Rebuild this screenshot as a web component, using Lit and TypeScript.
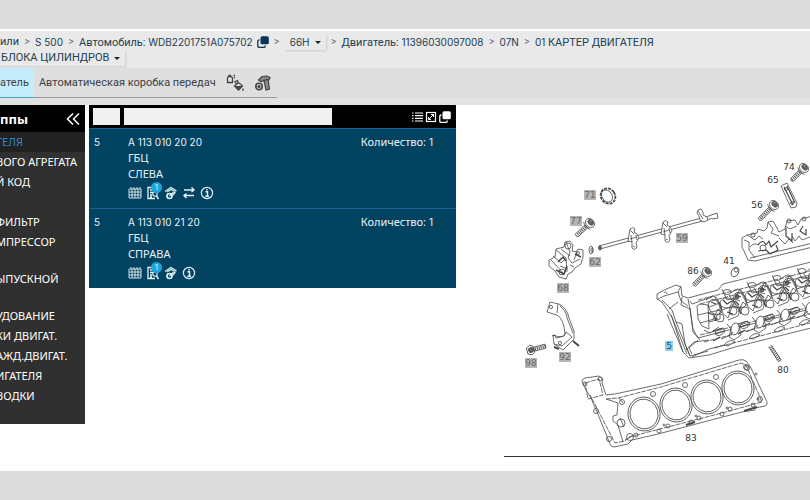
import { LitElement, html, css, svg, nothing } from "lit";
import { customElement, property } from "lit/decorators.js";

const calendarIcon = svg`<svg viewBox="0 0 14 14" width="14" height="14" fill="none" stroke="currentColor">
  <path d="M1 3h12v9H1zM1 6h12M1 9h12M4 3v9M7 3v9M10 3v9M3 1v2M6 1v2M9 1v2M12 1v2" stroke-width=".9"/></svg>`;
const reportIcon = svg`<svg viewBox="0 0 14 14" width="14" height="14" fill="none" stroke="currentColor">
  <path d="M8 1.500H2v11h7M4 4h3M4 6.500h3M4 9h2M4 11h2" stroke-width="1.300"/><circle cx="9" cy="8" r="2.200" stroke-width="1.100"/><path d="M10.500 10l2 3" stroke-width="1.400"/></svg>`;
const partIcon = svg`<svg viewBox="0 0 14 14" width="14" height="14" fill="none" stroke="currentColor">
  <path d="M1 5.500l6-4 5.500 3.500M3 6l4-2.500 3 1.500" stroke-width="1.100"/><circle cx="5.500" cy="10" r="2.500" stroke-width="1.600"/><path d="M5.500 10l4-4h2.500M8.500 9.500l2.500-3" stroke-width="1.200"/></svg>`;
const swapIcon = svg`<svg viewBox="0 0 14 14" width="14" height="14" fill="none" stroke="currentColor" stroke-width="1.400">
  <path d="M2 4h10M9.500 1.500L12 4 9.500 6M12 9.500H2M4.500 7.500L2 9.500 4.500 12"/></svg>`;
const infoIcon = svg`<svg viewBox="0 0 14 14" width="14" height="14" fill="none" stroke="currentColor">
  <circle cx="7" cy="7" r="5.600" stroke-width="1.200"/><path d="M5.500 5.800h2v4.200M5.300 10.200h3.700M6.300 3.700h1.400" stroke-width="1.400"/></svg>`;
const copyIcon = svg`<svg viewBox="0 0 12 12" width="12" height="12" fill="none">
  <path d="M2.500 4h-.5a1.200 1.200 0 0 0-1.200 1.200v5a1.200 1.200 0 0 0 1.200 1.200h5a1.200 1.200 0 0 0 1.200-1.200v-.7" stroke="currentColor" stroke-width="1.300"/><rect x="3.500" y=".3" width="8.300" height="8" rx="1.500" fill="currentColor"/></svg>`;
const listIcon = svg`<svg viewBox="0 0 12 12" width="12" height="12" stroke="currentColor" stroke-width="1.200">
  <path d="M1 2h1.500M4 2h8M1 4.700h1.500M4 4.700h8M1 7.400h1.500M4 7.400h8M1 10h1.500M4 10h8"/></svg>`;
const expandIcon = svg`<svg viewBox="0 0 12 12" width="12" height="12" fill="none" stroke="currentColor">
  <rect x="1.500" y="1.500" width="9" height="9" stroke-width="1.200"/><path d="M3.500 8.500l5-5M6 3.500h2.500V6M3.500 6v2.500H6" stroke-width="1"/></svg>`;
const collapseIcon = svg`<svg viewBox="0 0 14 12" width="14" height="12" fill="none" stroke="currentColor" stroke-width="1.500">
  <path d="M7 .5L1.500 6 7 11.500M13 .5L7.500 6l5.500 5.500"/></svg>`;
const fluidsIcon = svg`<svg viewBox="0 0 18 18" width="18" height="18" fill="none" stroke="#444">
  <path d="M1.500 8.500V4L2.500 2.500h2.500L6.500 4v4.500zM3 2.500v-1h2M7.500 1.500h1.500M8 3.500h1" stroke-width="1.300"/><path d="M8.500 12l4-3.500 4 3.500-4 4zM10.500 10l-1.500-2.500 2.500-1 1 3" stroke-width="1.300"/><path d="M9 12l7 0-3.500 4z" fill="#444" stroke="none"/><path d="M17 14.500v2.500" stroke-width="1.300"/></svg>`;
const toolsIcon = svg`<svg viewBox="0 0 18 18" width="18" height="18" fill="none" stroke="#444">
  <circle cx="5" cy="12.500" r="3.200" stroke-width="1.600"/><circle cx="5" cy="12.500" r="1.600" fill="#444" stroke="none"/><path d="M4.500 6L8 2.500l5-.5 3 1.500-1 2.500-4 .5-4 1z" fill="#888" stroke-width="1.200"/><path d="M10 6.500l2 9.500 3.500-1L14 5.500z" fill="#888" stroke-width="1.200"/></svg>`;

interface Part { pos: string; code: string; lines: string[]; swap: boolean }

const parts: Part[] = [
  { pos: "5", code: "A 113 010 20 20", lines: ["ГБЦ", "СЛЕВА"], swap: true },
  { pos: "5", code: "A 113 010 21 20", lines: ["ГБЦ", "СПРАВА"], swap: false },
];

const groups: { label: string; size?: string; active?: boolean }[] = [
  { label: "ТЕЛЯ", active: true },
  { label: "ВОГО АГРЕГАТА" },
  { label: "Й КОД", size: "mid" },
  { label: "ФИЛЬТР" },
  { label: "МПРЕССОР", size: "tall" },
  { label: "ЫПУСКНОЙ", size: "tall" },
  { label: "УДОВАНИЕ" },
  { label: "КИ ДВИГАТ." },
  { label: "АЖД.ДВИГАТ." },
  { label: "ИГАТЕЛЯ" },
  { label: "ВОДКИ" },
];

@customElement("part-row")
export class PartRow extends LitElement {
  @property({ attribute: false }) part!: Part;

  static styles = css`
    :host { display: grid; grid-template-columns: 34px 1fr auto; padding: 5px 23px 5px 5px;
      background: #034362; color: #e6f2f8; border-top: 1px solid #17609a;
      font: 11px/16px "Noto Sans", sans-serif; }
    .code { font: 10px/16px Inter, sans-serif; }
    .name { margin: 0; line-height: 16px; }
    .icons { display: flex; gap: 4px; padding: 3px 0 2px; }
    button { position: relative; display: block; width: 14px; height: 16px; padding: 1px 0; border: 0;
      background: none; color: inherit; }
    .badge { position: absolute; top: -3px; right: -2px; width: 11px; height: 11px; border-radius: 50%;
      background: #23a3dc; color: #d8f2ff; font: 8px/11px Inter, sans-serif; text-align: center; }
    svg { display: block; }
  `;

  render() {
    const { pos, code, lines, swap } = this.part;
    return html`
      <span class="code">${pos}</span>
      <div>
        <div class="code">${code}</div>
        ${lines.map((l) => html`<p class="name">${l}</p>`)}
        <div class="icons">
          <button aria-label="Календарь">${calendarIcon}</button>
          <button aria-label="Документ">${reportIcon}<span class="badge">1</span></button>
          <button aria-label="Деталь">${partIcon}</button>
          ${swap ? html`<button aria-label="Замена">${swapIcon}</button>` : nothing}
          <button aria-label="Информация">${infoIcon}</button>
        </div>
      </div>
      <span>Количество: <span class="code">1</span></span>`;
  }
}

const bolt = (x: number, y: number, angle: number, len: number) => svg`
  <g transform="translate(${x} ${y}) rotate(${angle})">
    <path class="body" d="M-5 -2H${-len}q-2 2 0 4H-5z"/>
    <path d="M-6 0H${-len}" stroke-width="2.800" stroke-dasharray="1 1"/>
    <ellipse rx="4" ry="5" class="body"/><ellipse cx="1" rx="2.300" ry="3.200" class="solid"/>
    <circle cx="2" cy="-1" r="1" class="body"/><path d="M-4 -5q-3 5 0 10"/>
  </g>`;

const bracket = (x: number, y: number) => svg`
  <g transform="translate(${x} ${y})">
    <path class="body" d="M-4 -3L-3 -9Q0 -12 2 -9L1 -6 4 -4 6 0 4 3 3 5 4 9Q2 13 -1 10L-1 4 -5 3Z"/>
    <path d="M-3 -8l4 4M-2 -3l1 7M3 -3l1 5M-3 1l6-2M0 8l2 1"/>
  </g>`;

const bays = [0, 1, 2, 3, 4];
const bores = [[644, 414], [676, 405], [707, 397], [738, 388]];
const callouts: [string, number, number, string][] = [
  ["71", 590, 195, "tag"], ["77", 576, 221, "tag"], ["62", 595, 262, "tag"], ["59", 682, 238, "tag"],
  ["68", 563, 288, "tag"], ["92", 565, 357, "tag"], ["98", 531, 363, "tag"], ["5", 669, 346, "tag on"],
  ["74", 789, 167, ""], ["65", 773, 180, ""], ["56", 757, 205, ""], ["41", 729, 261, ""],
  ["86", 693, 271, ""], ["80", 783, 370, ""], ["83", 691, 438, ""],
];

@customElement("engine-diagram")
export class EngineDiagram extends LitElement {
  static styles = css`
    :host { display: block; min-width: 0; }
    svg { display: block; width: 100%; min-height: 366px; fill: none; stroke: #484848; stroke-width: 0.8; stroke-linejoin: round; }
    .body { fill: #fff; }
    .solid { fill: #666; }
    .dash { stroke-dasharray: 5 1; }
    .light { stroke: #fff; }
    .base { stroke: #333; stroke-width: 1; }
    text { font: 9px "DejaVu Sans", sans-serif; fill: #333; stroke: none; text-anchor: middle; }
    rect { fill: none; stroke: none; }
    .tag rect { fill: #b5b5b5; }
    .tag text { fill: #666; }
    .on rect { fill: #8fd0ee; }
    .on text { fill: #124a6a; }
  `;

  render() {
    return html`<svg viewBox="500 105 310 366" preserveAspectRatio="xMinYMin slice" role="img" aria-label="ГБЦ">
      <g>
        <ellipse cx="608" cy="196" rx="7" ry="8" class="body" transform="rotate(-35 608 196)" stroke-width="1.800" stroke-dasharray="3 1"/>
        <ellipse cx="607" cy="196" rx="5" ry="6.500" class="body" transform="rotate(-35 607 196)"/>
      </g>
      ${bolt(590, 223, -43, 18)}
      <g>
        <path class="body" d="M599 246l117-32 1 3-117 32z"/><ellipse cx="600" cy="248" rx="1.500" ry="2" class="solid"/>
        <path d="M711 215l6-2 1 5-6 1" class="body"/>
        <ellipse cx="591" cy="250" rx="2" ry="4"/><ellipse cx="592" cy="250" rx="1" ry="2.500"/>
      </g>
      ${bracket(633, 238)} ${bracket(666, 231)}
      <path class="body" d="M697 213l1-3 3-1 2 3 0 3 4 2 1 3-4 2-4-2-1-4zM698 211l5 8"/>
      <g>
        <path class="body" d="M549 260l6-3 1-8 8-2 1-5 5-1 3 4-1 6 4 1 2-3 5 1v7l-2 7-6 4-3 4-4 2-2 5-7-2-4-6-6-5z"/>
        <path d="M551 260l12 13M556 250l10 8 1 14M566 242l4 10-2 6 4 5 8-4M553 256l8 7 4-4M577 252l-3 8M561 249l9 7M560 266l8 3M570 265l4 2"/>
        <path d="M556 270l8 4 3-8M558 262l5-5 3 4M575 254l6 3" stroke-width="1.500"/>
        <circle cx="568" cy="246" r="3"/><circle cx="562" cy="272" r="3"/><circle cx="578" cy="253" r="1.500"/>
      </g>
      <g>
        <path class="body" d="M547 312l3-10 9 2q8 4 10 14l5 13v8l-11 11-9-6-1-9q10 4 12-1-1-15-8-19z"/>
        <path d="M558 304l-1 9M560 306q7 6 7 12l6 15M552 336l3-1 1 3 8-2 2-4 6 5M554 344l8 2 10-9"/>
        <circle cx="551" cy="307" r="1.600"/><circle cx="560" cy="343" r="1.600"/>
        <path d="M573 341l6 5M554 347l5 2" stroke-width="2"/>
      </g>
      <g transform="translate(531 350) rotate(-15)">
        <path class="body" d="M-4-3l4-2 3 2v6l-3 2-4-2zM3-2h12v4H3z"/><path d="M4 0h11" stroke-width="2.800" stroke-dasharray="1 1"/><circle r="2.500" class="solid"/>
      </g>
      ${bolt(804, 168, -45, 17)} ${bolt(774, 205, -45, 20)} ${bolt(707, 272, -45, 18)}
      <g>
        <path class="body" d="M781 186l6-3 10 20-1 4-5 1z"/><path d="M784 187l9 18M787 186l8 17" stroke-width="1.200"/>
        <circle cx="786" cy="189" r="1.500"/><circle cx="792" cy="203" r="1.500"/>
        <ellipse class="body" cx="735" cy="272" rx="3.500" ry="5" transform="rotate(30 735 272)"/><circle cx="736" cy="270" r="2"/>
        <path d="M770 346l10 15" stroke-width="4"/><path d="M770 346l10 15" class="light" stroke-width="2.400" stroke-dasharray="1.200 .8"/>
      </g>
      <g>
        <path class="body" d="M742 238l5-3 10-2 1-4 6 2 3-3 1-6 5-1 4 7 2 4 6-3 2-8 8-1 3 5 3-6 12-3v31l-58 14-7-1-4-9-2-4z"/>
        <path d="M744 240l5 2v8l6 8M750 258l63-15M747 235l8 5 4-4 4 3M768 222l5 7-2 4 8 3M785 226l5 3 7-3M750 247q4-5 9-2M779 238l6 6 4-5 4 4M792 236l3 5 4-5 3 4 8-3"/>
        <path d="M758 245q5-7 8 0l3-4 2 6 7-6M758 251l8-1 4 4 8-4-2-5M786 228v8l6 5v-8M803 226l-3 5 6 4v-6" stroke-width="1.200"/>
        <circle cx="763" cy="248" r="3"/><circle cx="753" cy="235" r="2"/><circle cx="789" cy="221" r="2"/><circle cx="804" cy="219" r="2"/>
      </g>
      <g>
        <path class="body" d="M657 294l7-4 12-5 5 2 1 9 6 2 30-8 5-6 88-22v66l-76 19-26 8-20 3-6-6-11-35-10-15-5-3z"/>
        <path d="M658 299l6-3 14-4 3-6M664 293q2-3 3 1M662 300l10 10 4 12 6 2 3 20 5 12 18-5M669 309l9-7M678 292l3 9 7 5M667 314l16 38M671 315l16 39M676 322l14 34M682 297l-1 8 9 4 3 20 5 9 50-13 62-16M688 299l2 10M690 308l3 24 7 8M686 350l8-8 15-2M692 357l17-8 16-4M698 340l-9 8 3 6M690 301l2 3 20-7"/>
        <path class="dash" d="M698 300l112-29M700 304l110-29M700 335l110-28M704 342l106-28M714 348l96-25"/>
        <path d="M697 306l3-2 8 1 1 24-7-3-4-7zM709 307l11-4v16l-11 3M698 315l22-5M700 323l18-5M704 330l6 3 9-6"/>
        ${bays.map((i) => svg`<g transform="translate(${i * 25} ${i * -7})">
          <ellipse cx="715" cy="307" rx="6" ry="8" transform="rotate(-30 715 307)"/>
          <ellipse cx="727" cy="303" rx="7" ry="5"/><circle cx="720" cy="318" r="4"/><circle cx="733" cy="311" r="4"/>
          <ellipse cx="727" cy="292" rx="4" ry="2.500"/><circle cx="737" cy="297" r="2" class="solid"/>
          <path d="M706 300q8-8 12 0l4 10 8-3 4-8 6 2M713 319l5-10 10 9 5-14M722 289l5 11 8-2 5-9M728 320l10-4 3-10M715 297l8 16M729 295l10 15"/>
          <path stroke-width="1.300" d="M708 313l6 2 2 6M723 300l4 4 5-3M727 312l6 2M735 301l4 4M711 302l5 2"/>
          <ellipse cx="720" cy="332" rx="5" ry="3" transform="rotate(-25 720 332)"/>
          <ellipse cx="735" cy="329" rx="4" ry="6" transform="rotate(15 735 329)" class="body"/>
          <path d="M727 324l4 5-2 8 5 3 7-5-2-10M721 339q8-2 12-7M724 345q6-7 11-3l-7 4z"/>
          <path d="M713 331l10-3M715 334l9-3M713 341l7-4" stroke-width="1.200"/>
        </g>`)}
      </g>
      <g>
        <path class="body" d="M582 382q0-3 3-4l14-2 4 3-1 4 4 12 9-1 46-10 78-24q5-1 7 1l4 5 17 36q1 3-2 4l-10 2v2l-13 2-27 7-57 15-26 6-4 4-14 3q-3 0-4-3l-4-10-9-22-6-14-5-8z"/>
        <path class="dash" d="M585 383l14-4 4 16-15 4zM606 399l12-1 43-11 80-24 5 2 16 37-40 11-66 17-27 7-4 4-10 2-25-48"/>
        <path d="M606 399l12 4-1 12-4 1v5l5 4 5 17M619 398l4 5M620 418l4 9M625 440l9-5"/>
        ${bores.map(([x, y]) => svg`<g>
          <ellipse cx=${x} cy=${y} rx="16" ry="17" class="body" transform="rotate(-15 ${x} ${y})"/>
          <ellipse cx=${x} cy=${y} rx="14" ry="15" transform="rotate(-15 ${x} ${y})"/>
          <circle cx=${x + 9} cy=${y - 20} r="2.500"/><circle cx=${x + 18} cy=${y - 14} r="1"/>
          <circle cx=${x - 8} cy=${y + 21} r="2"/><circle cx=${x + 15} cy=${y + 17} r="2"/><circle cx=${x + 20} cy=${y + 11} r="1"/>
        </g>`)}
        <circle cx="585" cy="384" r="2"/><circle cx="600" cy="379" r="2"/><circle cx="596" cy="411" r="2.500"/><circle cx="609" cy="439" r="2.500"/>
        <circle cx="621" cy="423" r="4"/><circle cx="630" cy="437" r="3.500"/><circle cx="622" cy="402" r="2.500"/><circle cx="746" cy="367" r="2.500"/><circle cx="760" cy="399" r="2.500"/>
        <path d="M744 411l13-4M686 425l9-3" stroke-width="2"/>
      </g>
      <path class="base" d="M504 456.500H2000"/>
      ${callouts.map(([n, x, y, kind]) => svg`<g class=${kind}>
        <rect x=${n === "5" ? x - 4 : x - 6} y=${y - 5} width=${n === "5" ? 8 : 12} height="10"/>
        <text x=${x} y=${y + 3}>${n}</text></g>`)}
    </svg>`;
  }
}

@customElement("app-root")
export class AppRoot extends LitElement {
  static styles = css`
    :host { display: flex; flex-direction: column; min-height: 100vh; box-sizing: border-box;
      padding: 29px 0; background: #dcdcdc; color: #24404f; overflow: hidden;
      font: 11px/16px "Noto Sans", sans-serif; }
    svg { display: block; }
    button { border: 0; background: none; color: inherit; padding: 0; font: inherit; }
    .crumbs { background: #e9e9e9; border-top: 2px solid #fff; padding: 3px 0 2px;
      font: 11px/16px Roboto, "Noto Sans", sans-serif; }
    .line { display: flex; align-items: center; height: 16px; white-space: nowrap; }
    .line a { color: inherit; text-decoration: none; }
    .sep { width: 16px; text-align: center; color: #667; font-size: 10px; }
    .code { font: 10px/16px Inter, sans-serif; }
    .copy { color: #0c3357; margin-left: 4px; }
    .drop { display: flex; align-items: center; gap: 5px; padding: 0 5px; height: 16px;
      box-shadow: 1px 1px 2px #ccc; }
    .drop::after { content: ""; border: 3px solid transparent; border-top-color: #223; border-bottom: 0; }
    .first { padding-left: 1px; }
    .tabs { display: flex; align-items: stretch; background: #dedede; height: 30px;
      font: 11px/16px Roboto, "Noto Sans", sans-serif; }
    .tab { padding: 0 5px; border-bottom: 1px solid #999; color: #3c4246; white-space: nowrap; }
    .tab.active { padding-left: 0; background: #c4ecfb; border-bottom-color: #3fa3d4; }
    .tab.icon { padding: 0 5px; }
    .gap { height: 7px; background: #e2e2e2; }
    .main { flex: 1; display: grid; grid-template-columns: 85px 367px minmax(0, 1fr); column-gap: 4px;
      align-items: start; background: #fff; }
    .side { background: #303030; color: #fff; height: 319px; white-space: nowrap; overflow: hidden; }
    .side h2 { display: flex; justify-content: space-between; align-items: center; margin: 0; height: 27px;
      padding-right: 5px; background: #000; font: bold 13px/20px "Noto Sans", sans-serif; }
    .side ul { margin: 0; padding: 0; list-style: none; text-indent: -4px; }
    .side li { height: 20px; line-height: 20px; }
    .side li.tall { height: 37px; }
    .side li.mid { height: 40px; }
    .side a { color: inherit; text-decoration: none; }
    .side .active { color: #3a86c4; background: #222; }
    .bar { display: flex; align-items: center; gap: 4px; height: 23px; padding: 0 5px 0 4px; background: #000; color: #fff; }
    .bar input { box-sizing: border-box; height: 17px; min-width: 0; border: 0; background: #f0f0f0; padding: 0 4px; }
    .num { width: 27px; }
    .text { width: 208px; }
    .tools { display: flex; gap: 2px; margin-left: auto; }
    engine-diagram { margin-left: 40px; }
  `;

  render() {
    const sep = html`<span class="sep">&gt;</span>`;
    return html`
      <nav class="crumbs">
        <div class="line">
          <a href="#">или</a>${sep}<a href="#" class="code">S 500</a>${sep}
          <a href="#">Автомобиль: <span class="code">WDB2201751A075702</span></a>
          <button class="copy" aria-label="Копировать">${copyIcon}</button>${sep}
          <button class="drop code">66H</button>${sep}
          <a href="#">Двигатель: <span class="code">11396030097008</span></a>${sep}
          <a href="#" class="code">07N</a>${sep}
          <a href="#"><span class="code">01</span> КАРТЕР ДВИГАТЕЛЯ</a>
        </div>
        <div class="line"><button class="drop first">БЛОКА ЦИЛИНДРОВ</button></div>
      </nav>
      <div class="tabs">
        <button class="tab active">атель</button>
        <button class="tab">Автоматическая коробка передач</button>
        <button class="tab icon" aria-label="Жидкости">${fluidsIcon}</button>
        <button class="tab icon" aria-label="Инструменты">${toolsIcon}</button>
      </div>
      <div class="gap"></div>
      <div class="main">
        <aside class="side">
          <h2>ппы <button aria-label="Свернуть">${collapseIcon}</button></h2>
          <ul>
            ${groups.map((g) => html`<li class="${g.size ?? ""} ${g.active ? "active" : ""}"><a href="#">${g.label}</a></li>`)}
          </ul>
        </aside>
        <section>
          <div class="bar">
            <input class="num" aria-label="Позиция" /><input class="text" aria-label="Поиск" />
            <div class="tools">
              <button aria-label="Список">${listIcon}</button>
              <button aria-label="Развернуть">${expandIcon}</button>
              <button aria-label="Копировать">${copyIcon}</button>
            </div>
          </div>
          ${parts.map((p) => html`<part-row .part=${p}></part-row>`)}
        </section>
        <engine-diagram></engine-diagram>
      </div>`;
  }
}
